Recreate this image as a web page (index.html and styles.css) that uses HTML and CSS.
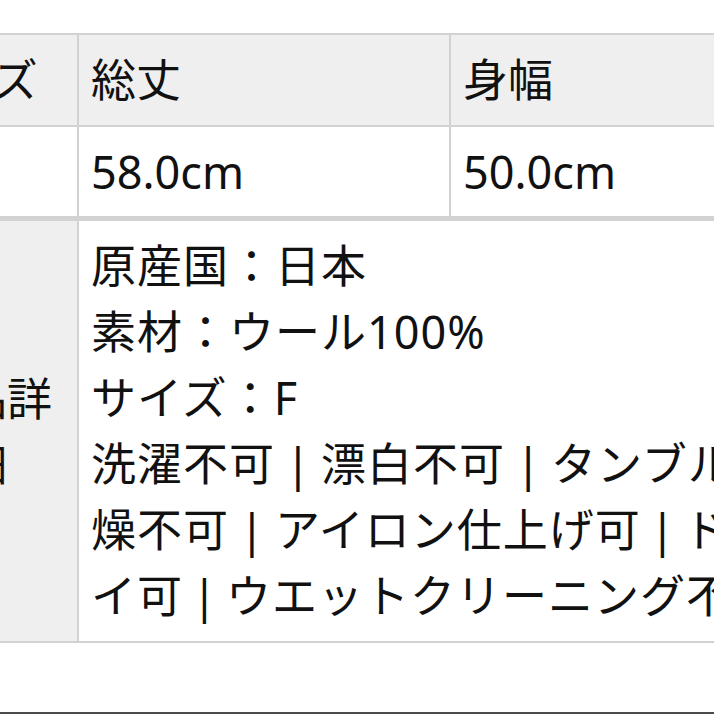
FILE: index.html
```html
<!DOCTYPE html>
<html lang="ja">
<head>
<meta charset="utf-8">
<link rel="stylesheet" href="styles.css">
</head>
<body>
<div class="page">
  <div class="sizes">
    <div class="cell head">サイズ</div>
    <div class="cell head">総丈</div>
    <div class="cell head">身幅</div>
    <div class="cell head">袖丈</div>
    <div class="cell">F</div>
    <div class="cell">58.0cm</div>
    <div class="cell">50.0cm</div>
    <div class="cell">60.0cm</div>
  </div>
  <div class="details">
    <div class="cell label"><span class="label-text">商品詳細</span></div>
    <div class="cell body-cell">
      <div class="detail-text">原産国：日本<br>素材：ウール100%<br>サイズ：F<br>洗濯不可<span class="sep">|</span>漂白不可<span class="sep">|</span>タンブル乾燥不可<span class="sep">|</span>アイロン仕上げ可<span class="sep narrow">|</span>ドライ可<span class="sep narrow">|</span>ウエットクリーニング不可</div>
    </div>
  </div>
  <div class="rule"></div>
</div>
</body>
</html>
```
FILE: styles.css
```css
html, body {
  margin: 0;
  padding: 0;
  background: #ffffff;
}
body {
  width: 714px;
  height: 714px;
  overflow: hidden;
  font-family: "Noto Sans", "Noto Sans CJK JP", sans-serif;
  font-size: 45px;
  color: #111111;
}
.page {
  padding-top: 33px;
}
.sizes {
  display: grid;
  grid-template-columns: 185px 370px 370px 370px;
  gap: 2px;
  padding: 2px;
  background: #d2d2d2;
  margin-left: -110px;
  width: max-content;
}
.details {
  display: grid;
  grid-template-columns: 185px 724px;
  column-gap: 2px;
  padding: 3px 2px 2px 2px;
  background: #d2d2d2;
  margin-left: -110px;
  width: max-content;
}
.cell {
  background: #ffffff;
  padding: 12px 12px 11px 12px;
  line-height: 66px;
  white-space: nowrap;
}
.cell.head {
  background: #efefef;
  padding-bottom: 12px;
}
.cell.label {
  background: #efefef;
  display: flex;
  align-items: center;
  justify-content: center;
  text-align: center;
  white-space: normal;
}
.label-text {
  display: block;
  width: 161px;
}
.body-cell {
  padding: 12px;
  white-space: normal;
}
.detail-text {
  width: 700px;
  line-height: 66px;
  letter-spacing: 1px;
}
.sep {
  display: inline-block;
  width: 46px;
  text-align: center;
  letter-spacing: 0;
}
.sep.narrow {
  width: 43px;
}
.rule {
  margin-top: 69px;
  height: 2px;
  background: #4a4a4a;
}
```
